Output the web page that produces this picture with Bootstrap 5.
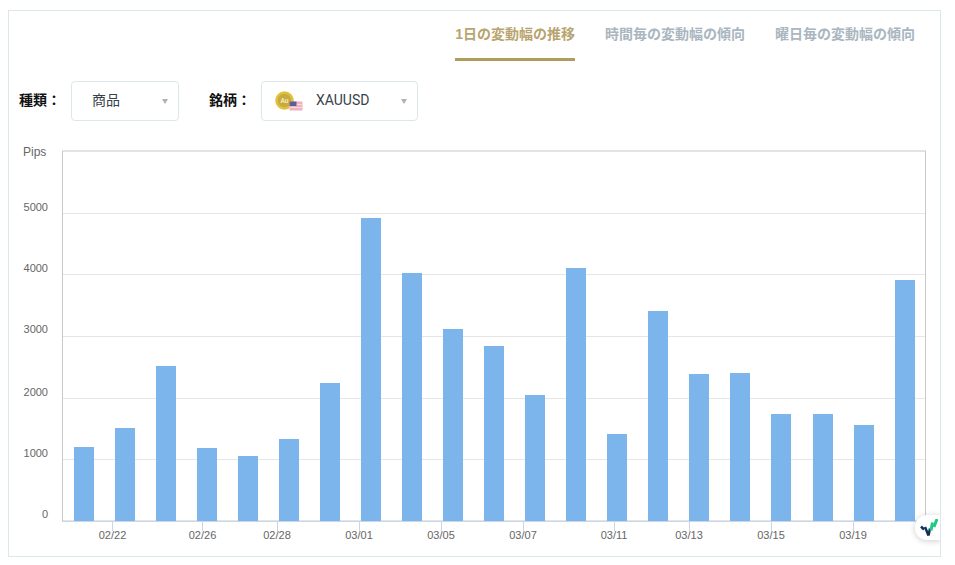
<!DOCTYPE html>
<html lang="ja">
<head>
<meta charset="utf-8">
<title>変動幅</title>
<link href="https://cdn.jsdelivr.net/npm/bootstrap@5.3.0/dist/css/bootstrap.min.css" rel="stylesheet">
<style>
html,body{height:100%;background:#fff;overflow:hidden}
body{font-family:Roboto,"Noto Sans CJK JP",sans-serif;font-size:14px}
.panel{height:547px;width:933px;margin:10px 0 0 8px;border:1px solid #dce8e8;background:#fff;display:flex;flex-direction:column;position:relative;overflow:hidden}
.tabbar{height:51px;flex:none;padding-right:25px;gap:30px;flex-wrap:nowrap}
.tabbar .nav-link{padding:13px 0 0;height:50px;font-size:14px;line-height:20px;font-weight:700;color:#a9b6bf;border-bottom:3px solid transparent}
.tabbar .nav-link.active{color:#b7a56f;border-bottom-color:#b09c5e}
.tabbar .digit{font-family:"Liberation Sans",sans-serif}
.filters{margin-top:19px;padding-left:10px;height:40px;flex:none}
.fname{font-weight:700;color:#111;width:52px;font-size:14px;line-height:20px;margin-top:-2px}
.fbox{height:40px;border:1px solid #dce8e8;border-radius:4px;color:#39424a;font-size:14px;position:relative;display:flex;align-items:center;line-height:20px;padding-bottom:2px}
.fkind{width:108px;padding-left:20px;margin-right:30px}
.fsym{width:157px;padding-left:13px}
.fsym svg{margin-right:12px;margin-top:2px}
.caret{position:absolute;right:10px;top:17px;width:0;height:0;border-left:3.5px solid transparent;border-right:3.5px solid transparent;border-top:5px solid #a9b3bb}
.plot{display:block;margin-top:20px;flex:none}
.plot text{font-family:"Liberation Sans",sans-serif;font-size:11px;fill:#666}
.plot .axis-name{font-size:12px}
.plot .bars rect{fill:#7cb5ec}
.grid line{stroke:#e6e6e6;stroke-width:1}
.ticks line{stroke:#ccd6eb;stroke-width:1}
.stamp{position:absolute;right:-1px;bottom:16px;width:26px;height:25px;background:#fff;border-radius:12px 0 0 12px;box-shadow:0 1px 6px rgba(0,0,0,.2);display:flex;align-items:center;padding-left:5px}
</style>
</head>
<body>
<div class="panel">
  <ul class="nav tabbar justify-content-end">
    <li class="nav-item"><a class="nav-link active" href="#"><span class="digit">1</span>日の変動幅の推移</a></li>
    <li class="nav-item"><a class="nav-link" href="#">時間毎の変動幅の傾向</a></li>
    <li class="nav-item"><a class="nav-link" href="#">曜日毎の変動幅の傾向</a></li>
  </ul>
  <div class="d-flex align-items-center filters">
    <span class="fname">種類：</span>
    <div class="fbox fkind">商品<span class="caret"></span></div>
    <span class="fname">銘柄：</span>
    <div class="fbox fsym">
      <svg width="29" height="20" viewBox="0 0 29 20" aria-hidden="true">
        <circle cx="9.500" cy="9.500" r="9.300" fill="#e0c23c"/>
        <circle cx="9.500" cy="9.500" r="6.800" fill="#c8ab3e"/>
        <text x="9.500" y="11.500" text-anchor="middle" font-size="6.500" font-weight="700" fill="#f3e8b8" font-family="Roboto,sans-serif">Au</text>
        <rect x="14.500" y="10.500" width="13" height="9" fill="#eeb3bd"/>
        <rect x="14.500" y="13" width="13" height="1" fill="#f8d8dd"/>
        <rect x="14.500" y="16" width="13" height="1" fill="#f8d8dd"/>
        <rect x="14.500" y="10.500" width="7" height="4.500" fill="#5a5f96"/>
      </svg>
      XAUUSD<span class="caret"></span>
    </div>
  </div>
  <svg class="plot" width="931" height="415" viewBox="9 141 931 415" role="img" aria-label="1日の変動幅の推移">
    <g class="grid">
      <line x1="62" x2="926" y1="213.500" y2="213.500"/>
      <line x1="62" x2="926" y1="274.500" y2="274.500"/>
      <line x1="62" x2="926" y1="336.500" y2="336.500"/>
      <line x1="62" x2="926" y1="398.500" y2="398.500"/>
      <line x1="62" x2="926" y1="459.500" y2="459.500"/>
    </g>
    <rect x="62.500" y="151" width="863" height="370" fill="none" stroke="#c8c8c8"/>
    <g class="bars">
      <rect x="74" y="447" width="20" height="74"/>
      <rect x="115" y="428" width="20" height="93"/>
      <rect x="156" y="366" width="20" height="155"/>
      <rect x="197" y="448" width="20" height="73"/>
      <rect x="238" y="456" width="20" height="65"/>
      <rect x="279" y="439" width="20" height="82"/>
      <rect x="320" y="383" width="20" height="138"/>
      <rect x="361" y="218" width="20" height="303"/>
      <rect x="402" y="273" width="20" height="248"/>
      <rect x="443" y="329" width="20" height="192"/>
      <rect x="484" y="346" width="20" height="175"/>
      <rect x="525" y="395" width="20" height="126"/>
      <rect x="566" y="268" width="20" height="253"/>
      <rect x="607" y="434" width="20" height="87"/>
      <rect x="648" y="311" width="20" height="210"/>
      <rect x="689" y="374" width="20" height="147"/>
      <rect x="730" y="373" width="20" height="148"/>
      <rect x="771" y="414" width="20" height="107"/>
      <rect x="813" y="414" width="20" height="107"/>
      <rect x="854" y="425" width="20" height="96"/>
      <rect x="895" y="280" width="20" height="241"/>
    </g>
    <g class="ticks">
      <line x1="62" x2="926" y1="521.500" y2="521.500"/>
      <line x1="112.500" x2="112.500" y1="521" y2="531"/>
      <line x1="202.500" x2="202.500" y1="521" y2="531"/>
      <line x1="277.500" x2="277.500" y1="521" y2="531"/>
      <line x1="359.500" x2="359.500" y1="521" y2="531"/>
      <line x1="441.500" x2="441.500" y1="521" y2="531"/>
      <line x1="523.500" x2="523.500" y1="521" y2="531"/>
      <line x1="614.500" x2="614.500" y1="521" y2="531"/>
      <line x1="689.500" x2="689.500" y1="521" y2="531"/>
      <line x1="771.500" x2="771.500" y1="521" y2="531"/>
      <line x1="853.500" x2="853.500" y1="521" y2="531"/>
    </g>
    <g text-anchor="end">
      <text x="48" y="211">5000</text>
      <text x="48" y="272">4000</text>
      <text x="48" y="333">3000</text>
      <text x="48" y="396">2000</text>
      <text x="48" y="457">1000</text>
      <text x="48" y="518">0</text>
    </g>
    <text class="axis-name" x="23" y="156">Pips</text>
    <g text-anchor="middle">
      <text x="112.500" y="539">02/22</text>
      <text x="202.500" y="539">02/26</text>
      <text x="277" y="539">02/28</text>
      <text x="359" y="539">03/01</text>
      <text x="441" y="539">03/05</text>
      <text x="523" y="539">03/07</text>
      <text x="614" y="539">03/11</text>
      <text x="689" y="539">03/13</text>
      <text x="771" y="539">03/15</text>
      <text x="853" y="539">03/19</text>
    </g>
  </svg>
  <div class="stamp">
    <svg width="18" height="18" viewBox="0 0 18 18" aria-hidden="true">
      <path d="M1 7.500l3 3" stroke="#10305a" stroke-width="2.500" fill="none"/>
      <path d="M5 8l3.500 8.500" stroke="#10305a" stroke-width="2.500" fill="none"/>
      <path d="M8.500 16.500l1.500-7" stroke="#10305a" stroke-width="2.500" fill="none"/>
      <path d="M11 11.500l1.500-8" stroke="#1ecb83" stroke-width="3" fill="none"/>
      <path d="M14 8l3-8" stroke="#1ecb83" stroke-width="3" fill="none"/>
    </svg>
  </div>
</div>
<script src="https://cdn.jsdelivr.net/npm/bootstrap@5.3.0/dist/js/bootstrap.bundle.min.js"></script>
</body>
</html>
